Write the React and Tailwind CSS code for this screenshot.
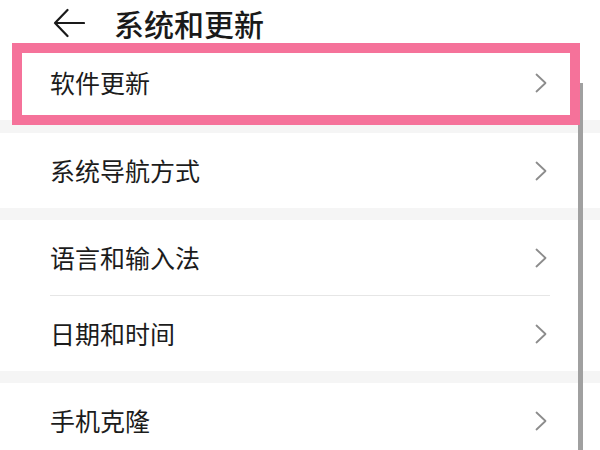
import React from 'react';

const Chevron = () => (
    <svg width="12" height="20" viewBox="0 0 12 20" fill="none">
        <path d="M1.5 1.5 L10.5 10 L1.5 18.5" stroke="#8c8c8c" strokeWidth="1.8" strokeLinecap="round" strokeLinejoin="round" />
    </svg>
);

const Row = ({ label }) => (
    <div className="flex items-center justify-between h-[75px] pl-[50px] pr-[53px]">
        <span className="text-[25px] leading-none text-[#1c1c1c]">{label}</span>
        <Chevron />
    </div>
);

const Band = ({ h = 'h-[12px]' }) => <div className={`${h} bg-[#f5f5f5]`} />;

const App = () => {
    return (
        <div
            className="relative w-[600px] h-[450px] overflow-hidden bg-white"
            style={{ fontFamily: '"Noto Sans CJK SC", "Noto Sans", sans-serif' }}
        >
            {/* Header */}
            <div className="flex items-center h-[45px] pl-[53px] gap-[29px]">
                <svg width="32" height="30" viewBox="0 0 32 30" fill="none">
                    <path d="M2 15 L31 15 M14.5 2 L2 15 L14.5 28" stroke="#1a1a1a" strokeWidth="2.2" strokeLinecap="round" strokeLinejoin="round" />
                </svg>
                <span className="text-[30px] leading-none font-medium text-[#1a1a1a]">系统和更新</span>
            </div>

            {/* List */}
            <Row label="软件更新" />
            <Band h="h-[13px]" />
            <Row label="系统导航方式" />
            <Band />
            <Row label="语言和输入法" />
            <div className="ml-[50px] mr-[50px] h-px bg-[#e6e6e6]" />
            <Row label="日期和时间" />
            <Band />
            <Row label="手机克隆" />

            {/* Scrollbar */}
            <div className="absolute left-[578px] top-[83px] bottom-0 w-[5px] bg-[#a0a0a0]" />

            {/* Highlight annotation */}
            <div className="absolute left-[12px] top-[43px] w-[568px] h-[82px] border-[10px] border-[#f5729a]" />
        </div>
    );
};

export default App;
